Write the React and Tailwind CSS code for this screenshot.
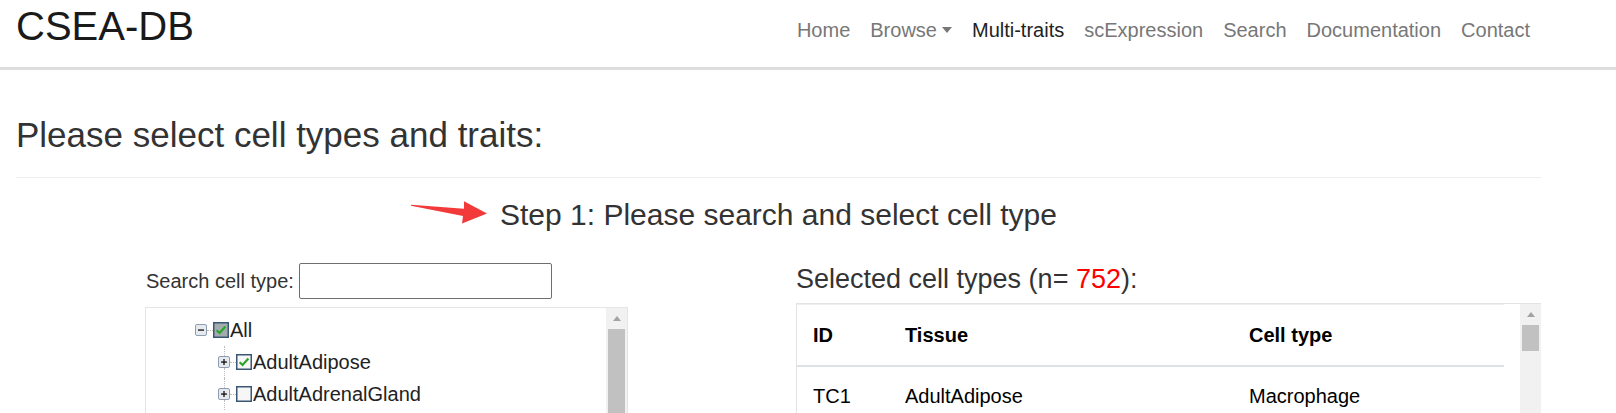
import React from 'react';

const navItems = ['Home', 'Browse', 'Multi-traits', 'scExpression', 'Search', 'Documentation', 'Contact'];

const Switch = ({ open }) => (
    <svg width="12" height="12" viewBox="0 0 12 12" className="shrink-0">
        <rect x="0.5" y="0.5" width="11" height="11" rx="1.5" fill="#e6eaef" stroke="#8e9db1" />
        <rect x="3" y="5.4" width="6" height="1.3" fill="#111" />
        {!open && <rect x="5.35" y="3" width="1.3" height="6" fill="#111" />}
    </svg>
);

const Check = ({ checked, fill = '#f6f6f6' }) => (
    <svg width="16" height="16" viewBox="0 0 16 16" className="shrink-0">
        <rect x="0.75" y="0.75" width="14.5" height="14.5" fill={fill} stroke="#3a5676" strokeWidth="1.5" />
        {checked && <path d="M3.6 8.2 L6.6 11 L12.4 4.6" stroke="#2aa52a" strokeWidth="2.2" fill="none" />}
    </svg>
);

// one row of the zTree
const TreeRow = ({ level, open, checked, fill, label, lines }) => (
    <li className={`flex h-[32px] items-center ${level === 0 ? 'pl-[49px]' : 'pl-[72px]'}`}>
        <div className="flex h-full w-[12px] flex-col items-center">
            <div className={`w-0 flex-1 ${lines ? 'border-l border-dotted border-[#bbb]' : ''}`}></div>
            <Switch open={open} />
            <div className={`w-0 flex-1 ${lines ? 'border-l border-dotted border-[#bbb]' : ''}`}></div>
        </div>
        <div className="w-[6px] border-t border-dotted border-[#bbb]"></div>
        <Check checked={checked} fill={fill} />
        <span className="ml-[1px] text-[20px] leading-[20px] text-[#222]">{label}</span>
    </li>
);

const ScrollUp = () => (
    <div className="flex h-[21px] w-full items-center justify-center">
        <span className="h-0 w-0 border-x-[4px] border-b-[5px] border-x-transparent border-b-[#a3a3a3]"></span>
    </div>
);

const App = () => {
    return (
        <div className="min-h-screen overflow-hidden bg-white font-['Liberation_Sans',Arial,sans-serif] text-[#333]">
            {/* navbar */}
            <div className="flex h-[70px] items-start border-b-[3px] border-[#ddd]">
                <div className="pl-4 pt-[6px] text-[40px] leading-[40px] text-[#1a1a1a]">CSEA-DB</div>
                <nav className="ml-auto flex items-start gap-[20px] pr-[86px] pt-[20px] text-[20px] leading-[20px] text-[#777]">
                    {navItems.map((item) => (
                        <span key={item} className={`flex items-center ${item === 'Multi-traits' ? 'text-[#222]' : ''}`}>
                            {item}
                            {item === 'Browse' && (
                                <span className="ml-[5px] h-0 w-0 border-x-[5px] border-t-[6px] border-x-transparent border-t-[#777]"></span>
                            )}
                        </span>
                    ))}
                </nav>
            </div>

            <div className="pl-4 pr-[75px]">
                <h2 className="mt-[47px] text-[35px] leading-[35px] font-normal">Please select cell types and traits:</h2>
                <hr className="mt-[25px] border-t border-[#eee]" />

                <div className="mt-[22px] text-center text-[30px] leading-[30px]">
                    <span className="relative inline-block">
                        <svg width="77" height="26" viewBox="0 0 77 26" className="absolute right-full top-0 mr-[12px]">
                            <polygon points="0,4.8 53,8.8 53,1.2 76,13.5 51,23.5 52,16 0,5.8" fill="#f23a3a" />
                        </svg>
                        Step 1: Please search and select cell type
                    </span>
                </div>

                <div className="mt-[33px] grid grid-cols-[765px_1fr]">
                    {/* left: tree */}
                    <div className="pl-[129px]">
                        <div className="flex h-[36px] items-center pl-[1px]">
                            <span className="text-[20px] leading-[20px]">Search cell type:</span>
                            <input type="text" className="ml-[5px] h-[36px] w-[253px] rounded-[2px] border border-[#6f6f6f] bg-white outline-none" />
                        </div>
                        <div className="mt-[8px] flex h-[120px] w-[483px] border border-[#e5e5e5]">
                            <ul className="flex-1 pt-[6px]">
                                <TreeRow level={0} open checked fill="#a3acad" label="All" />
                                <TreeRow level={1} checked label="AdultAdipose" lines />
                                <TreeRow level={1} label="AdultAdrenalGland" lines />
                            </ul>
                            <div className="flex w-[21px] flex-col items-center bg-[#f1f1f1]">
                                <ScrollUp />
                                <div className="w-[17px] flex-1 bg-[#c1c1c1]"></div>
                            </div>
                        </div>
                    </div>

                    {/* right: selected table */}
                    <div className="pl-[15px]">
                        <div className="mt-[3px] text-[27px] leading-[27px]">
                            Selected cell types (n= <span className="text-[#ff0000]">752</span>):
                        </div>
                        <div className="mt-[10px] flex h-[120px] border-l border-t border-[#e3e3e3]">
                            <div className="w-[707px] border-t border-[#eee] text-[20px] text-black">
                                <div className="flex h-[62px] items-center border-b-2 border-[#dee2e6] font-bold">
                                    <div className="w-[92px] pl-4">ID</div>
                                    <div className="w-[344px] pl-4">Tissue</div>
                                    <div className="flex-1 pl-4">Cell type</div>
                                </div>
                                <div className="flex h-[58px] items-center">
                                    <div className="w-[92px] pl-4">TC1</div>
                                    <div className="w-[344px] pl-4">AdultAdipose</div>
                                    <div className="flex-1 pl-4">Macrophage</div>
                                </div>
                            </div>
                            <div className="flex-1"></div>
                            <div className="flex w-[21px] flex-col items-center bg-[#f1f1f1]">
                                <ScrollUp />
                                <div className="h-[26px] w-[17px] bg-[#c1c1c1]"></div>
                            </div>
                        </div>
                    </div>
                </div>
            </div>
        </div>
    );
};

export default App;
